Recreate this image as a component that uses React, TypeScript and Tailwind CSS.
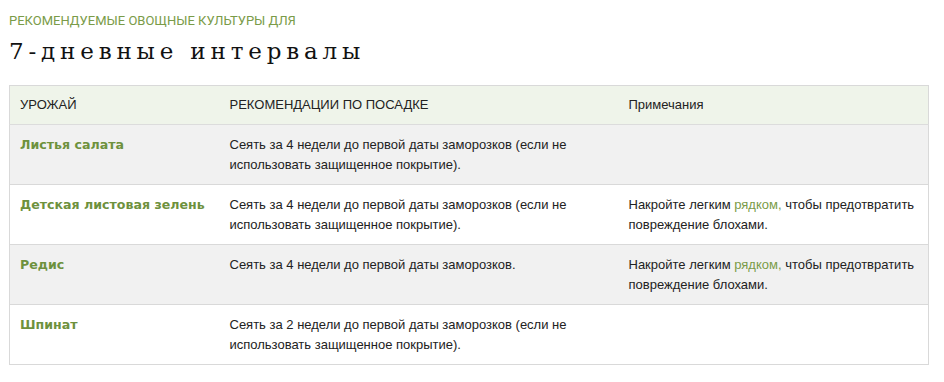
import React from 'react';

interface Row {
  crop: string;
  plan: string;
  note?: boolean;
}

const rows: Row[] = [
  {
    crop: 'Листья салата',
    plan: 'Сеять за 4 недели до первой даты заморозков (если не использовать защищенное покрытие).',
  },
  {
    crop: 'Детская листовая зелень',
    plan: 'Сеять за 4 недели до первой даты заморозков (если не использовать защищенное покрытие).',
    note: true,
  },
  {
    crop: 'Редис',
    plan: 'Сеять за 4 недели до первой даты заморозков.',
    note: true,
  },
  {
    crop: 'Шпинат',
    plan: 'Сеять за 2 недели до первой даты заморозков (если не использовать защищенное покрытие).',
  },
];

export default function App() {
  return (
    <div className="bg-white w-[944px] h-[382px] pl-[9px] pr-[16px] pt-[13px]">
      <p className="font-['Roboto',sans-serif] text-[13px] leading-[16px] text-[#7a9b48] uppercase">
        Рекомендуемые овощные культуры для
      </p>
      <h1 className="font-['DejaVu_Serif',serif] text-[23px] leading-[34px] tracking-[0.21em] text-[#111] mt-[5px]">
        7-дневные интервалы
      </h1>
      <table className="mt-[17px] w-[920px] border-collapse border border-[#d9d9d9] font-['Liberation_Sans',Arial,sans-serif] text-[13px] leading-[20px] text-[#222]">
        <colgroup>
          <col className="w-[210px]" />
          <col className="w-[399px]" />
          <col />
        </colgroup>
        <thead>
          <tr className="bg-[#eff4ea] h-[39px] border-b border-[#dcdcdc]">
            <th className="text-left font-normal px-[10px] align-middle">УРОЖАЙ</th>
            <th className="text-left font-normal px-[10px] align-middle">РЕКОМЕНДАЦИИ ПО ПОСАДКЕ</th>
            <th className="text-left font-normal px-[10px] align-middle">Примечания</th>
          </tr>
        </thead>
        <tbody>
          {rows.map((r, i) => (
            <tr
              key={r.crop}
              className={`h-[59px] border-b border-[#d9d9d9] ${i % 2 === 0 ? 'bg-[#f1f1f1]' : 'bg-white'}`}
            >
              <td className="align-top whitespace-nowrap px-[10px] pt-[10px] pb-[9px] font-['DejaVu_Sans',sans-serif] text-[12.6px] font-bold text-[#6e913d]">
                {r.crop}
              </td>
              <td className="align-top px-[10px] pt-[10px] pb-[9px]">{r.plan}</td>
              <td className="align-top px-[10px] pt-[10px] pb-[9px]">
                {r.note && (
                  <>
                    Накройте легким <span className="text-[#7a9b48]">рядком,</span> чтобы предотвратить
                    повреждение блохами.
                  </>
                )}
              </td>
            </tr>
          ))}
        </tbody>
      </table>
    </div>
  );
}
